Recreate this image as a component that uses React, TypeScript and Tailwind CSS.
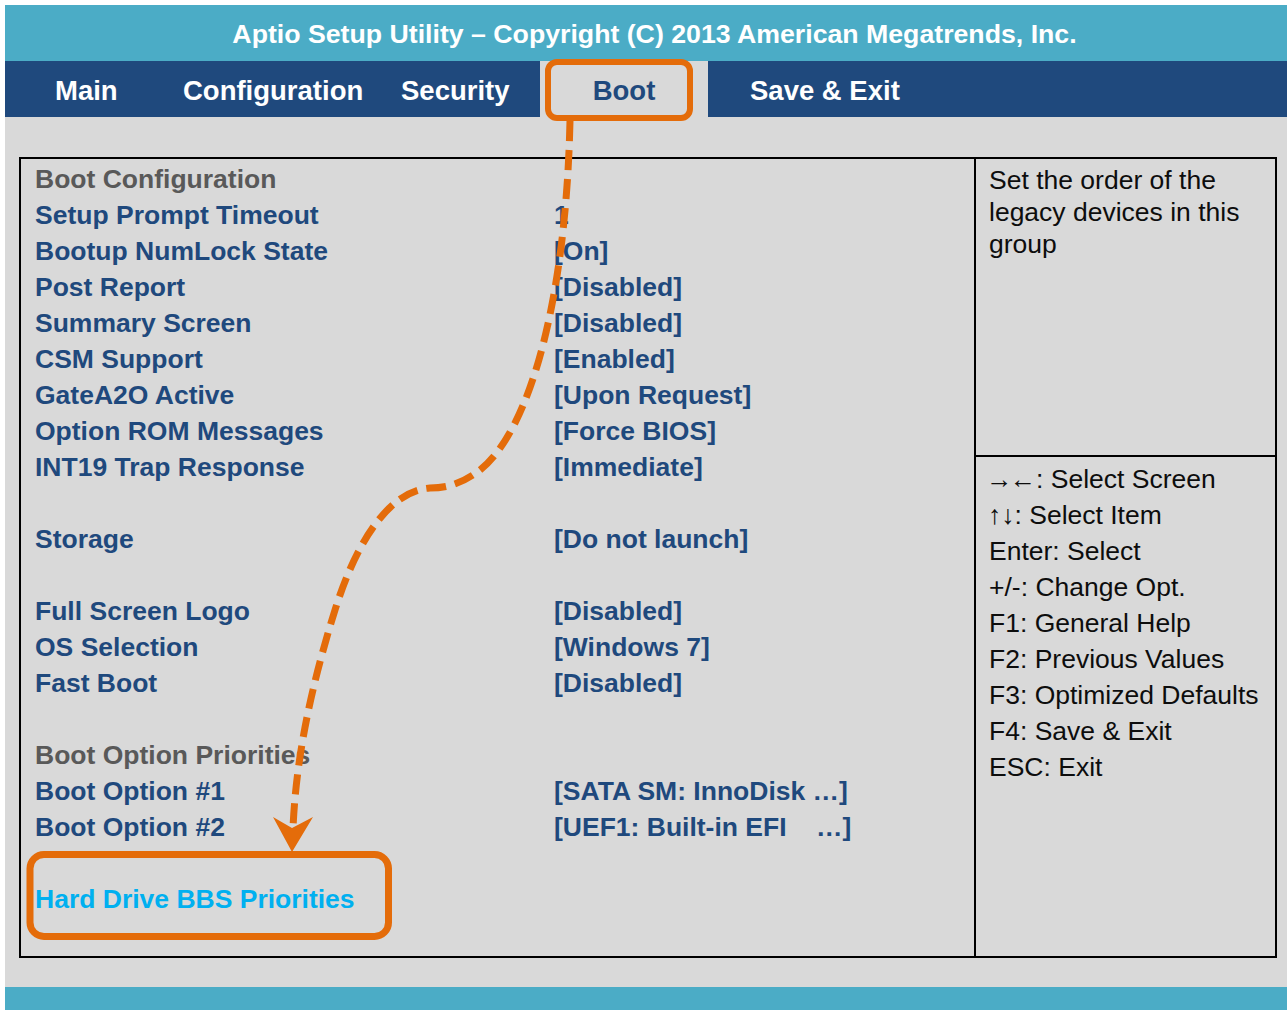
type Row = { label?: string; value?: string; kind?: "head" | "item" | "active" }

const rows: Row[] = [
  { label: "Boot Configuration", kind: "head" },
  { label: "Setup Prompt Timeout", value: "1" },
  { label: "Bootup NumLock State", value: "[On]" },
  { label: "Post Report", value: "[Disabled]" },
  { label: "Summary Screen", value: "[Disabled]" },
  { label: "CSM Support", value: "[Enabled]" },
  { label: "GateA2O Active", value: "[Upon Request]" },
  { label: "Option ROM Messages", value: "[Force BIOS]" },
  { label: "INT19 Trap Response", value: "[Immediate]" },
  {},
  { label: "Storage", value: "[Do not launch]" },
  {},
  { label: "Full Screen Logo", value: "[Disabled]" },
  { label: "OS Selection", value: "[Windows 7]" },
  { label: "Fast Boot", value: "[Disabled]" },
  {},
  { label: "Boot Option Priorities", kind: "head" },
  { label: "Boot Option #1", value: "[SATA SM: InnoDisk …]" },
  { label: "Boot Option #2", value: "[UEF1: Built-in EFI    …]" },
  {},
  { label: "Hard Drive BBS Priorities", kind: "active" },
]

const keys = [
  "Enter: Select",
  "+/-: Change Opt.",
  "F1: General Help",
  "F2: Previous Values",
  "F3: Optimized Defaults",
  "F4: Save & Exit",
  "ESC: Exit",
]

function labelColor(kind?: Row["kind"]) {
  if (kind === "head") return "text-[#595959]"
  if (kind === "active") return "text-[#00B0F0]"
  return "text-[#1F497D]"
}

export default function App() {
  return (
    <div
      className="relative w-[1287px] h-[1010px] bg-white pl-[5px] pt-[5px]"
      style={{ fontFamily: '"Liberation Sans", Arial, sans-serif' }}
    >
      <div className="flex h-[56px] items-center justify-center bg-[#4BACC6] pl-[17px] pt-[2px] text-[26.7px] font-bold text-white">
        Aptio Setup Utility – Copyright (C) 2013 American Megatrends, Inc.
      </div>

      <div className="flex h-[56px] bg-[#1F497D] pt-[3px] text-[27.5px] font-bold text-white">
        <div className="flex w-[145px] items-center pl-[50px]">Main</div>
        <div className="flex w-[230px] items-center pl-[33px]">Configuration</div>
        <div className="flex w-[160px] items-center pl-[21px]">Security</div>
        <div className="-mt-[3px] flex w-[168px] items-center justify-center bg-[#D9D9D9] pt-[3px] text-[#1F497D]">Boot</div>
        <div className="flex items-center pl-[42px]">Save &amp; Exit</div>
      </div>

      <div className="flex h-[870px] flex-col bg-[#D9D9D9] pl-[14px] pr-[10px] pt-[40px]">
        <div className="flex h-[801px] border-2 border-black">
          <div className="flex-1 pl-[14px] pt-[2px] text-[26.5px] font-bold leading-[36px]">
            {rows.map((r, i) => (
              <div key={i} className="flex h-[36px]">
                <div className={`w-[519px] ${labelColor(r.kind)}`}>{r.label}</div>
                <div className="whitespace-pre text-[#1F497D]">{r.value}</div>
              </div>
            ))}
          </div>
          <div className="flex w-[301px] flex-col border-l-2 border-black text-[26.5px] text-[#0d0d0d]">
            <div className="h-[298px] border-b-2 border-black pl-[13px] pr-[8px] pt-[5px] leading-[32px]">
              Set the order of the legacy devices in this group
            </div>
            <div className="pl-[13px] pt-[4px] leading-[36px]">
              <div className="h-[36px]">
                <span className="-ml-[3px] tracking-[-6px]">→</span>
                <span className="pl-[3px]">←: Select Screen</span>
              </div>
              <div className="h-[36px]">
                <span className="-ml-[1px] tracking-[-2px]">↑</span>
                <span className="pl-[2px]">↓: Select Item</span>
              </div>
              {keys.map((k) => (
                <div key={k} className="h-[36px]">{k}</div>
              ))}
            </div>
          </div>
        </div>
      </div>

      <div className="h-[23px] bg-[#4BACC6]" />

      {/* orange annotation layer */}
      <svg className="pointer-events-none absolute left-0 top-0" width="1287" height="1010" viewBox="0 0 1287 1010">
        <rect x="548" y="62" width="142" height="56" rx="9" fill="none" stroke="#E46C0A" strokeWidth="6" />
        <rect x="30" y="854.5" width="358.5" height="82" rx="14" fill="none" stroke="#E46C0A" strokeWidth="7" />
        <path
          d="M570 121 C566 300 530 430 480 470 C460 485 445 488 430 488 C395 490 360 530 335 610 C310 690 296 760 293 828"
          fill="none"
          stroke="#E46C0A"
          strokeWidth="7"
          strokeDasharray="20 9"
        />
        <polygon points="273,817 292,852 313,817 292,828" fill="#E46C0A" />
      </svg>
    </div>
  )
}
